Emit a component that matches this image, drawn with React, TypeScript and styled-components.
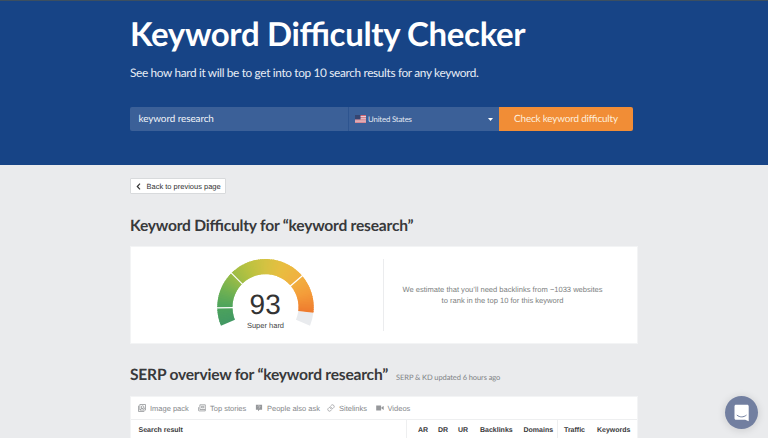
import React from "react";
import styled, { createGlobalStyle } from "styled-components";

const Global = createGlobalStyle`
  html, body { margin: 0; padding: 0; height: 438px; overflow: hidden; }
  body { background: #eaebed; font-family: "Liberation Sans", Arial, sans-serif; color: #333; }
  * { box-sizing: border-box; text-rendering: geometricPrecision; }
`;

const lato = `
  font-family: Lato, "Open Sans", sans-serif;
  font-feature-settings: "liga" 1;
`;

const Page = styled.div`
  width: 768px;
  height: 438px;
  overflow: hidden;
  background: #eaebed;
`;

const Hero = styled.header`
  height: 165px;
  padding: 13px 0 0 130px;
  background: #174486;
  border-top: 1px solid #3c4f60;
  color: #fff;
  ${lato}
`;

const Title = styled.h1`
  margin: 0;
  font-size: 33px;
  line-height: 40px;
  font-weight: 700;
  letter-spacing: -0.35px;
  white-space: nowrap;
`;

const Subtitle = styled.p`
  margin: 11px 0 0;
  font-size: 11.8px;
  line-height: 16px;
  letter-spacing: -0.33px;
  color: #e6ecf5;
  white-space: nowrap;
`;

const SearchForm = styled.form`
  display: flex;
  width: 503px;
  height: 24px;
  margin: 26px 0 0;
  border-radius: 2px;
  overflow: hidden;
`;

const KeywordField = styled.div`
  width: 219px;
  padding-left: 8.5px;
  background: #3b6098;
  border-right: 1px solid #2d548f;
  font-size: 9.9px;
  line-height: 25px;
  letter-spacing: -0.06px;
  color: #f1f4f9;
`;

const CountrySelect = styled.div`
  display: flex;
  align-items: center;
  width: 150px;
  padding: 0 6px;
  background: #3b6098;
  font-size: 7.8px;
  letter-spacing: -0.17px;
  color: #e3e9f2;
`;

const CountryName = styled.span`
  flex: 1;
  margin-left: 2px;
`;

const SubmitButton = styled.button`
  width: 134px;
  border: 0;
  padding: 0;
  background: #f18d36;
  color: #fdeedd;
  ${lato}
  font-size: 9.9px;
  line-height: 25px;
  letter-spacing: -0.15px;
`;

const Content = styled.main`
  width: 508px;
  margin: 0 0 0 130px;
  padding-top: 13px;
`;

const BackButton = styled.button`
  display: flex;
  align-items: center;
  width: 96px;
  height: 16px;
  padding: 0 0 0 5px;
  border: 1px solid #d8dadc;
  border-radius: 1px;
  background: #fff;
  color: #333;
  font: 7.5px/15px "Liberation Sans", Arial, sans-serif;
  white-space: nowrap;
  gap: 5.5px;
`;

const Heading = styled.h2`
  margin: 0;
  ${lato}
  font-size: 15.6px;
  line-height: 20px;
  font-weight: 700;
  letter-spacing: -0.22px;
  color: #38393b;
  white-space: nowrap;
`;

const DifficultyHeading = styled(Heading)`
  margin: 22px 0 10px;
`;

const SerpHeader = styled.div`
  display: flex;
  align-items: baseline;
  gap: 8px;
  margin: 21px 0 11px;
`;

const Updated = styled.span`
  ${lato}
  font-size: 7.5px;
  letter-spacing: -0.09px;
  color: #808285;
  white-space: nowrap;
`;

const Card = styled.section`
  display: flex;
  height: 98px;
  background: #fff;
  border: 1px solid #f3f4f5;
`;

const GaugePane = styled.div`
  width: 253px;
  height: 72px;
  margin-top: 12px;
  padding-left: 82px;
  border-right: 1px solid #ebecee;
`;

const Estimate = styled.p`
  flex: 1;
  margin: 37px 0 0;
  padding-right: 16px;
  font-size: 7.57px;
  line-height: 11px;
  text-align: center;
  color: #7d7f81;
`;

const SerpCard = styled.section`
  height: 60px;
  background: #fff;
  border: 1px solid #f3f4f5;
`;

const Features = styled.div`
  display: flex;
  align-items: center;
  height: 23px;
  padding-left: 7px;
  border-bottom: 1px solid #eeeff0;
`;

const Feature = styled.div<{ $w: number }>`
  display: flex;
  align-items: center;
  gap: 4px;
  width: ${(p) => p.$w}px;
  font-size: 7.5px;
  color: #85878a;
  white-space: nowrap;
`;

const TableHead = styled.div`
  display: flex;
  height: 36px;
  font-size: 7px;
  line-height: 21px;
  font-weight: 700;
  color: #37383a;
`;

const HeadCell = styled.div<{ $w: number; $line?: boolean; $pad?: number }>`
  width: ${(p) => p.$w}px;
  padding-left: ${(p) => p.$pad ?? 0}px;
  border-right: ${(p) => (p.$line ? "1px solid #eeeff0" : "0")};
  white-space: nowrap;
`;

const ChatButton = styled.button`
  position: fixed;
  left: 725px;
  top: 396px;
  width: 33px;
  height: 33px;
  padding: 0;
  border: 0;
  border-radius: 50%;
  background: #727fa0;
  box-shadow: 0 1px 8px rgba(0, 0, 0, 0.14);
  display: flex;
  align-items: center;
  justify-content: center;
`;

const GaugeText = styled.text<{ $size: number; $fill: string }>`
  font-family: "Liberation Sans", Arial, sans-serif;
  font-size: ${(p) => p.$size}px;
  fill: ${(p) => p.$fill};
  text-anchor: middle;
`;

const CX = 52.5;
const CY = 48.2;
const OUTER = 48.2;
const INNER = 33;
const START = 202.5;
const SWEEP = 225;

const stops: [number, number[]][] = [
  [0, [66, 152, 100]],
  [10, [76, 163, 92]],
  [20, [112, 177, 82]],
  [30, [156, 188, 70]],
  [40, [187, 194, 64]],
  [50, [212, 194, 66]],
  [60, [232, 190, 64]],
  [72, [241, 176, 64]],
  [82, [244, 156, 58]],
  [93, [238, 122, 46]],
];

const colorAt = (v: number) => {
  let i = 0;
  while (i < stops.length - 2 && stops[i + 1][0] <= v) i++;
  const [a, ca] = stops[i];
  const [b, cb] = stops[i + 1];
  const t = (v - a) / (b - a);
  return `rgb(${ca.map((c, k) => Math.round(c + (cb[k] - c) * t)).join(",")})`;
};

const point = (v: number, r: number) => {
  const a = ((START - (v / 100) * SWEEP) * Math.PI) / 180;
  return `${(CX + r * Math.cos(a)).toFixed(2)} ${(CY - r * Math.sin(a)).toFixed(2)}`;
};

const slice = (from: number, to: number) =>
  `M${point(from, OUTER)}A${OUTER} ${OUTER} 0 0 1 ${point(to, OUTER)}L${point(to, INNER)}A${INNER} ${INNER} 0 0 0 ${point(from, INNER)}Z`;

const Gauge = () => (
  <svg width="106" height="72" viewBox="0 0 106 72">
    <path d={slice(93, 100)} fill="#e9ebee" />
    {Array.from({ length: 93 }, (_, v) => (
      <path key={v} d={slice(v, Math.min(v + 1.6, 93))} fill={colorAt(v + 0.5)} />
    ))}
    {[9.7, 30, 72].map((v) => (
      <path key={v} d={`M${point(v, OUTER + 1)}L${point(v, INNER - 1)}`} stroke="#fff" strokeWidth="1.2" />
    ))}
    <GaugeText x={52.2} y={55.4} $size={28} $fill="#333">93</GaugeText>
    <GaugeText x={52.5} y={68.6} $size={7.5} $fill="#444">Super hard</GaugeText>
  </svg>
);

const Flag = () => (
  <svg width="11" height="8" viewBox="0 0 11 8">
    <rect width="11" height="8" fill="#e9dce2" />
    {[0, 2.2, 4.4, 6.6].map((y) => (
      <rect key={y} y={y} width="11" height="1.1" fill="#cf6675" />
    ))}
    <rect width="5.5" height="4.4" fill="#354571" />
  </svg>
);

const g = "#96989b";
const ImageIcon = () => (
  <svg width="8" height="8" viewBox="0 0 8 8" fill="none" stroke={g} strokeWidth="0.8">
    <path d="M1.8.5h5.7v5.6H1.8zM.5 1.7v5.8h5.8" />
    <circle cx="4.6" cy="3.1" r="1.3" />
    <path d="m2 6 2-2 1.2 1.3 2-1.4" />
  </svg>
);
const StoriesIcon = () => (
  <svg width="8" height="8" viewBox="0 0 8 8" fill="none" stroke={g} strokeWidth="0.8">
    <path d="M1.9.8h5.4v6.1H1.2c-.5 0-.8-.3-.8-.8V3.2M1.9.8v4.800M1.900 5.500h5.400M3.500 2.300h2.300v1.500H3.500z" />
  </svg>
);
const AskIcon = () => (
  <svg width="8" height="8" viewBox="0 0 8 8">
    <path d="M.9.8h6.2v4.9H4.6L3 7.3V5.7H.9z" fill={g} />
    <path d="M2.8 2.5c.2-1.2 2.3-1 2.2.2 0 .7-1 .6-1 1.3M4 4.5v.6" fill="none" stroke="#fff" strokeWidth=".4" />
  </svg>
);
const LinkIcon = () => (
  <svg width="8" height="8" viewBox="0 0 24 24" fill="none" stroke={g} strokeWidth="2.3" strokeLinecap="round">
    <path d="M10 13a5 5 0 0 0 7.5.5l3-3a5 5 0 0 0-7-7l-1.8 1.7M14 11a5 5 0 0 0-7.5-.5l-3 3a5 5 0 0 0 7 7l1.7-1.7" />
  </svg>
);
const VideoIcon = () => (
  <svg width="8" height="8" viewBox="0 0 8 8" fill={g}>
    <path d="M.2 1.4h4.9v5H.2zM5.500 3.300l2.200-1.400v4L5.500 4.600z" />
  </svg>
);

const features = [
  { label: "Image pack", Icon: ImageIcon, w: 60 },
  { label: "Top stories", Icon: StoriesIcon, w: 57 },
  { label: "People also ask", Icon: AskIcon, w: 72 },
  { label: "Sitelinks", Icon: LinkIcon, w: 48.5 },
  { label: "Videos", Icon: VideoIcon, w: 40 },
];

export default function App() {
  return (
    <Page>
      <Global />
      <Hero>
        <Title>Keyword Difficulty Checker</Title>
        <Subtitle>See how hard it will be to get into top 10 search results for any keyword.</Subtitle>
        <SearchForm>
          <KeywordField>keyword research</KeywordField>
          <CountrySelect>
            <Flag />
            <CountryName>United States</CountryName>
            <svg width="5" height="3" viewBox="0 0 5 3"><path d="M0 0h5L2.5 3z" fill="#fff" /></svg>
          </CountrySelect>
          <SubmitButton type="button">Check keyword difficulty</SubmitButton>
        </SearchForm>
      </Hero>
      <Content>
        <BackButton>
          <svg width="5" height="7" viewBox="0 0 5 7"><path d="M4 .7 1.3 3.5 4 6.3" fill="none" stroke="#333" strokeWidth="1.2" /></svg>
          <span>Back to previous page</span>
        </BackButton>
        <DifficultyHeading>Keyword Difficulty for “keyword research”</DifficultyHeading>
        <Card>
          <GaugePane><Gauge /></GaugePane>
          <Estimate>
            We estimate that you’ll need backlinks from ~1033 websites
            <br />
            to rank in the top 10 for this keyword
          </Estimate>
        </Card>
        <SerpHeader>
          <Heading>SERP overview for “keyword research”</Heading>
          <Updated>SERP &amp; KD updated 6 hours ago</Updated>
        </SerpHeader>
        <SerpCard>
          <Features>
            {features.map(({ label, Icon, w }) => (
              <Feature key={label} $w={w}><Icon />{label}</Feature>
            ))}
          </Features>
          <TableHead>
            <HeadCell $w={276} $pad={7.5} $line>Search result</HeadCell>
            <HeadCell $w={31} $pad={11}>AR</HeadCell>
            <HeadCell $w={20}>DR</HeadCell>
            <HeadCell $w={22}>UR</HeadCell>
            <HeadCell $w={43.5}>Backlinks</HeadCell>
            <HeadCell $w={34.5} $line>Domains</HeadCell>
            <HeadCell $w={39} $pad={6}>Traffic</HeadCell>
            <HeadCell $w={40}>Keywords</HeadCell>
          </TableHead>
        </SerpCard>
      </Content>
      <ChatButton aria-label="Open chat">
        <svg width="16" height="18" viewBox="0 0 16 18">
          <path d="M2 .8h11.2c.9 0 1.5.6 1.5 1.5v15l-3.5-1.5H2c-.9 0-1.5-.6-1.5-1.5v-12C.5 1.4 1.1.8 2 .8z" fill="#fff" />
          <path d="M3.1 11.3c2.8 2.2 6.3 2.2 9.1 0" fill="none" stroke="#727fa0" strokeWidth="1" strokeLinecap="round" />
        </svg>
      </ChatButton>
    </Page>
  );
}
